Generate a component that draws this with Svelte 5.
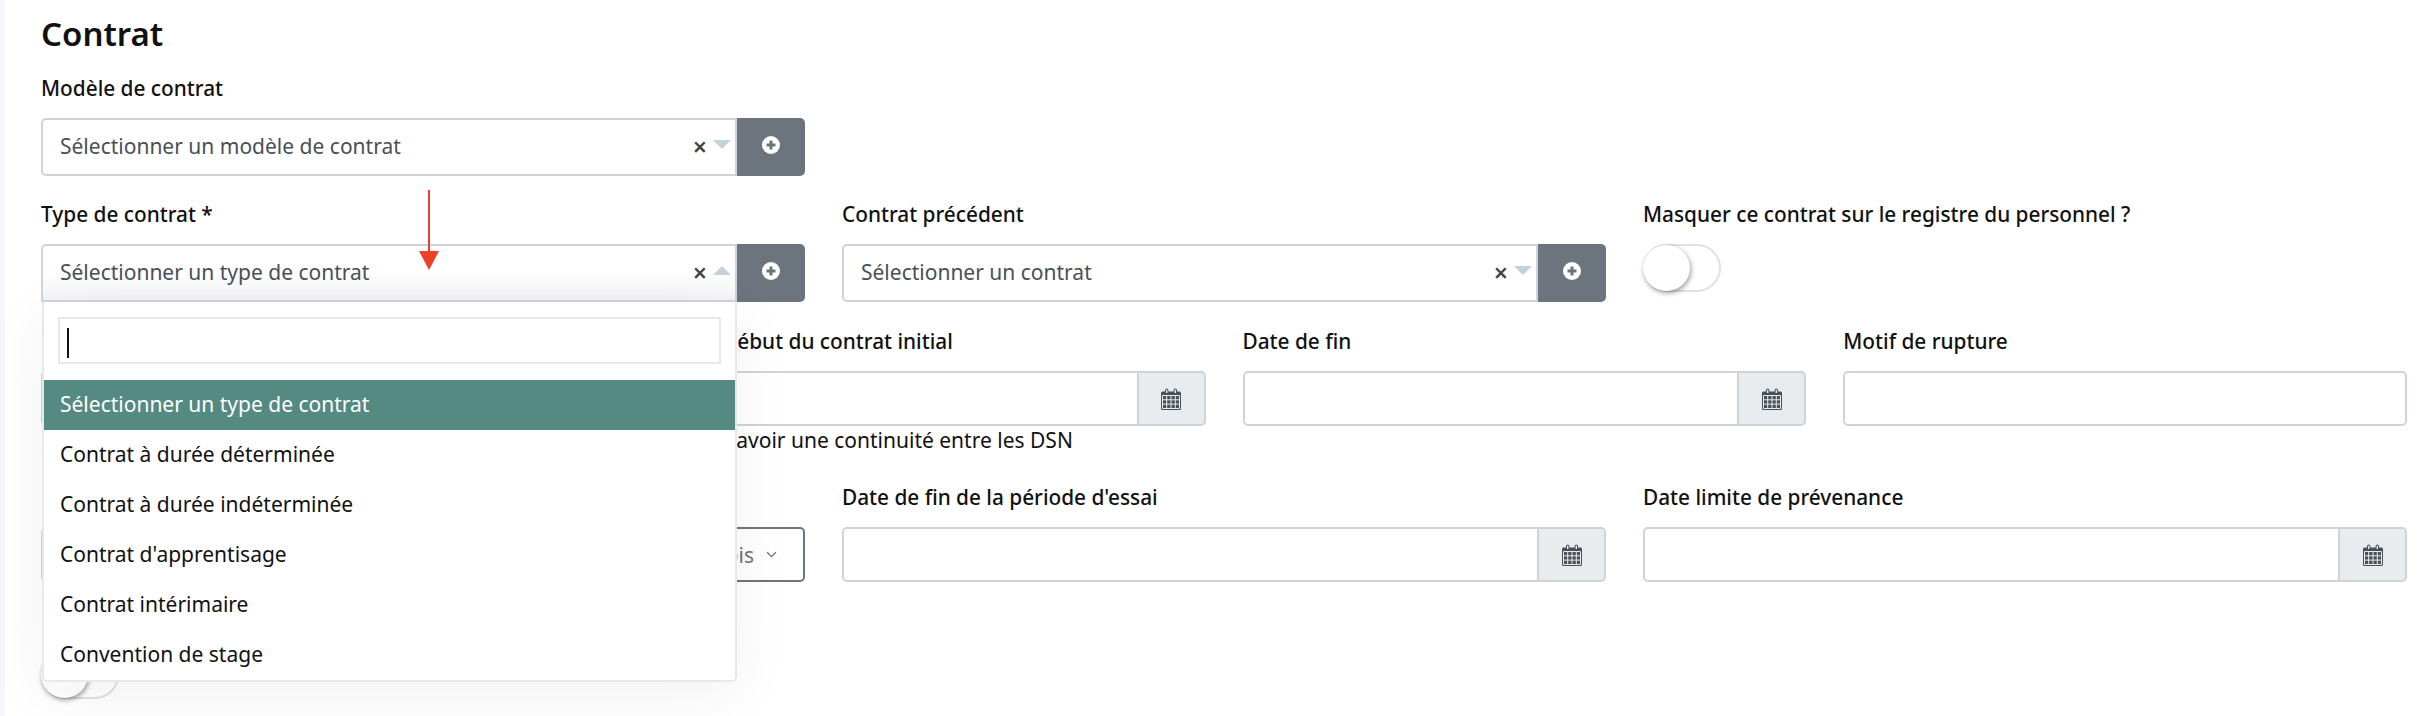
<script>
  const options = [
    'Sélectionner un type de contrat',
    'Contrat à durée déterminée',
    'Contrat à durée indéterminée',
    "Contrat d'apprentisage",
    'Contrat intérimaire',
    'Convention de stage'
  ];
</script>

{#snippet plusButton()}
  <div class="addon-dark">
    <svg class="plus" viewBox="0 0 18 18">
      <circle cx="9" cy="9" r="9" fill="#fff" />
      <path d="M9 4.5v9M4.5 9h9" stroke="#6c757d" stroke-width="3" />
    </svg>
  </div>
{/snippet}

{#snippet selectBox(text, open)}
  <div class="select" class:open>
    <span class="placeholder">{text}</span>
    <span class="clear">×</span>
    <span class="caret" class:up={open}></span>
  </div>
{/snippet}

{#snippet dateInput()}
  <div class="group">
    <div class="input"></div>
    <div class="addon-light">
      <svg class="calendar" viewBox="0 0 20 22">
        <path fill="#495057" d="M1.5 3.5H4V2.2a1.7 1.7 0 0 1 3.4 0v1.3h5.2V2.2a1.7 1.7 0 0 1 3.4 0v1.3h2.5A1.5 1.5 0 0 1 20 5v15.5a1.5 1.5 0 0 1-1.5 1.5h-17A1.5 1.5 0 0 1 0 20.5V5a1.5 1.5 0 0 1 1.5-1.5z" />
        <path fill="#e9ecef" d="M5 2.2a.7.7 0 0 1 1.4 0V5H5zM13.6 2.2a.7.7 0 0 1 1.4 0V5h-1.4z" />
        <path fill="none" stroke="#e9ecef" stroke-width="1" d="M1.5 7.5h17v13h-17zM1.5 11.8h17M1.5 16.1h17M5.7 7.5v13M10 7.5v13M14.3 7.5v13" />
      </svg>
    </div>
  </div>
{/snippet}

<div class="page">
  <h1>Contrat</h1>

  <div class="row thirds">
    <div class="field">
      <div class="label">Modèle de contrat</div>
      <div class="group tall">
        {@render selectBox('Sélectionner un modèle de contrat', false)}
        {@render plusButton()}
      </div>
    </div>
  </div>

  <div class="row thirds">
    <div class="field">
      <div class="label">Type de contrat *</div>
      <div class="group tall anchor">
        {@render selectBox('Sélectionner un type de contrat', true)}
        {@render plusButton()}

        <div class="dropdown">
          <div class="search"><span class="text-cursor"></span></div>
          <ul>
            {#each options as option, i}
              <li class:active={i === 0}>{option}</li>
            {/each}
          </ul>
        </div>

        <svg class="arrow" viewBox="0 0 20 80">
          <path d="M9 0h2v61h9l-10 19L0 61h9z" fill="#ee4027" />
        </svg>
      </div>
    </div>
    <div class="field">
      <div class="label">Contrat précédent</div>
      <div class="group tall">
        {@render selectBox('Sélectionner un contrat', false)}
        {@render plusButton()}
      </div>
    </div>
    <div class="field">
      <div class="label">Masquer ce contrat sur le registre du personnel ?</div>
      <div class="toggle"><span class="knob"></span></div>
    </div>
  </div>

  <div class="row quarters">
    <div class="field">
      <div class="label"></div>
      {@render dateInput()}
    </div>
    <div class="field">
      <div class="label">Date de début du contrat initial</div>
      {@render dateInput()}
      <small>Permet d'avoir une continuité entre les DSN</small>
    </div>
    <div class="field">
      <div class="label">Date de fin</div>
      {@render dateInput()}
    </div>
    <div class="field">
      <div class="label">Motif de rupture</div>
      <div class="group"><div class="input"></div></div>
    </div>
  </div>

  <div class="row thirds">
    <div class="field">
      <div class="label"></div>
      <div class="group">
        <div class="input"></div>
        <div class="unit">Mois
          <svg class="chevron" viewBox="0 0 12 8">
            <path d="M1 1.5l5 5 5-5" fill="none" stroke="#6c757d" stroke-width="1.5" />
          </svg>
        </div>
      </div>
    </div>
    <div class="field">
      <div class="label">Date de fin de la période d'essai</div>
      {@render dateInput()}
    </div>
    <div class="field">
      <div class="label">Date limite de prévenance</div>
      {@render dateInput()}
    </div>
  </div>

  <div class="row thirds">
    <div class="field">
      <div class="label last-label"></div>
      <div class="toggle"><span class="knob"></span></div>
    </div>
  </div>
</div>

<style>
  :global(body) {
    margin: 0;
    background: #fff;
  }

  .page {
    box-sizing: border-box;
    height: 716px;
    overflow: hidden;
    border-left: 5px solid #f4f6f9;
    padding: 0 25px 0 36px;
    font-family: 'Noto Sans', sans-serif;
    font-size: 21px;
    color: #111;
  }

  h1 {
    margin: 0;
    padding-top: 14px;
    height: 73px;
    box-sizing: border-box;
    font-size: 33px;
    line-height: 40px;
    font-weight: 600;
  }

  .row {
    display: grid;
    column-gap: 37px;
    margin-bottom: 23px;
  }

  .thirds {
    grid-template-columns: repeat(3, 1fr);
  }

  .quarters {
    grid-template-columns: repeat(4, 1fr);
    margin-top: 24px;
    margin-bottom: 0;
    height: 156px;
  }

  .field {
    min-width: 0;
  }

  .label {
    height: 30px;
    line-height: 30px;
    margin-bottom: 15px;
    font-weight: 500;
    font-size: 20.8px;
  }

  .last-label {
    margin-bottom: 16px;
  }

  small {
    display: block;
    font-size: 21px;
    line-height: 28px;
  }

  .group {
    display: flex;
    height: 55px;
  }

  .group.tall {
    height: 58px;
  }

  .anchor {
    position: relative;
  }

  .select {
    flex: 1;
    box-sizing: border-box;
    display: flex;
    align-items: center;
    padding: 0 4px 2px 17px;
    border: 2px solid #ced4da;
    border-radius: 5px 0 0 5px;
    background: #fff;
  }

  .select.open {
    border-radius: 5px 0 0 0;
    background: linear-gradient(#fff 50%, #f2f3f4);
  }

  .placeholder {
    flex: 1;
    color: #495057;
  }

  .clear {
    font-size: 25px;
    font-weight: 600;
    color: #444;
    margin-right: 6px;
    line-height: 1;
  }

  .caret {
    width: 0;
    height: 0;
    border-left: 9px solid transparent;
    border-right: 9px solid transparent;
    border-top: 9px solid #c2d2dc;
    margin-top: -4px;
  }

  .caret.up {
    border-top: none;
    border-bottom: 9px solid #c2d2dc;
  }

  .addon-dark {
    width: 68px;
    flex: none;
    display: flex;
    justify-content: center;
    box-sizing: border-box;
    padding-top: 18px;
    background: #6c757d;
    border-radius: 0 5px 5px 0;
  }

  .plus {
    width: 18px;
    height: 18px;
  }

  .input {
    flex: 1;
    box-sizing: border-box;
    border: 2px solid #ced4da;
    border-radius: 5px;
    background: #fff;
  }

  .input:not(:last-child) {
    border-radius: 5px 0 0 5px;
  }

  .addon-light {
    width: 67px;
    flex: none;
    box-sizing: border-box;
    display: flex;
    align-items: center;
    justify-content: center;
    background: #e9ecef;
    border: 2px solid #ced4da;
    border-left-width: 0;
    border-radius: 0 5px 5px 0;
  }

  .calendar {
    width: 20px;
    height: 22px;
  }

  .unit {
    width: 300px;
    flex: none;
    box-sizing: border-box;
    display: flex;
    align-items: center;
    justify-content: flex-end;
    gap: 12px;
    padding-right: 26px;
    color: #6c757d;
    border: 2px solid #6c757d;
    border-left: none;
    border-radius: 0 5px 5px 0;
  }

  .chevron {
    width: 11px;
    height: 7px;
  }

  .toggle {
    box-sizing: border-box;
    width: 78px;
    height: 48px;
    border: 2px solid #dfe1e3;
    border-radius: 24px;
    background: #fff;
  }

  .knob {
    display: block;
    width: 47px;
    height: 46px;
    margin: -1px 0 0 -2px;
    border-radius: 50%;
    background: #fff;
    box-shadow: 1px 2px 5px rgba(0, 0, 0, 0.4);
  }

  .dropdown {
    position: absolute;
    top: 58px;
    left: 1px;
    z-index: 5;
    width: 695px;
    box-sizing: border-box;
    background: #fff;
    border: 2px solid #e4e9ec;
    border-top: none;
    border-radius: 0 0 5px 5px;
    box-shadow: 0 12px 60px rgba(0, 0, 0, 0.06);
  }

  .search {
    box-sizing: border-box;
    height: 47px;
    margin: 15px 14px 16px 14px;
    padding: 9px 7px;
    border: 2px solid #e4e9ec;
  }

  .text-cursor {
    display: block;
    width: 2px;
    height: 30px;
    background: #111;
  }

  ul {
    list-style: none;
    margin: 0;
    padding: 0;
  }

  li {
    height: 50px;
    line-height: 48px;
    padding-left: 16px;
  }

  li.active {
    background: #548a81;
    color: #fff;
  }

  .arrow {
    position: absolute;
    top: -54px;
    left: 378px;
    z-index: 6;
    width: 20px;
    height: 80px;
  }
</style>
